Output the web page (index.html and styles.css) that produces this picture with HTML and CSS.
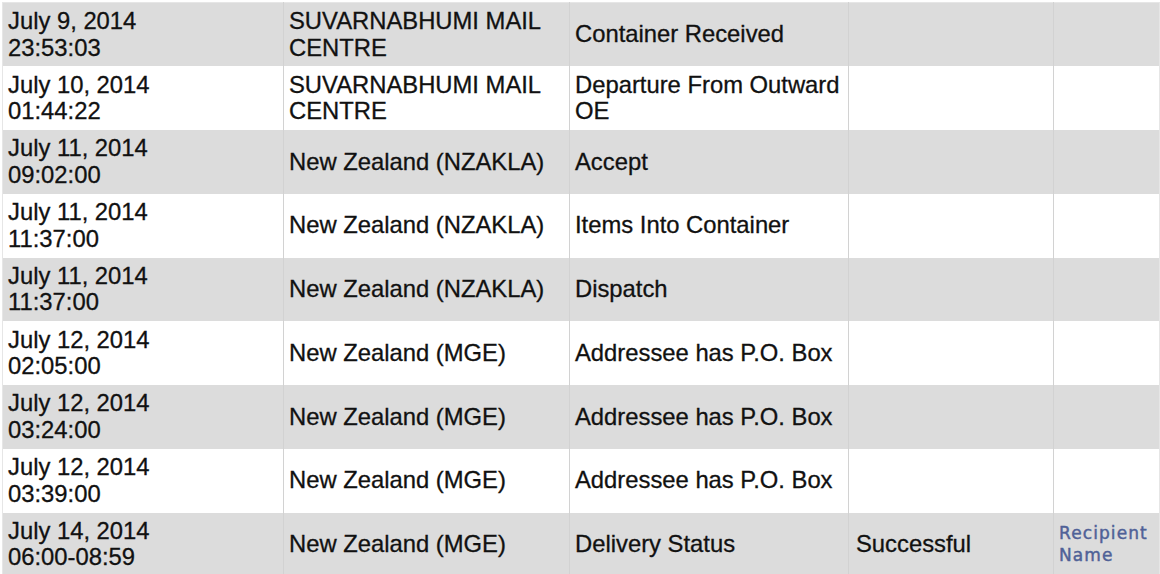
FILE: index.html
```
<!DOCTYPE html>
<html>
<head>
<meta charset="utf-8">
<link rel="stylesheet" href="styles.css">
</head>
<body>
<table class="track">
  <colgroup>
    <col class="c-date"><col class="c-loc"><col class="c-event"><col class="c-status"><col class="c-recip">
  </colgroup>
  <tbody>
    <tr class="odd"><td>July 9, 2014<br>23:53:03</td><td>SUVARNABHUMI MAIL CENTRE</td><td>Container Received</td><td></td><td></td></tr>
    <tr class="even"><td>July 10, 2014<br>01:44:22</td><td>SUVARNABHUMI MAIL CENTRE</td><td>Departure From Outward OE</td><td></td><td></td></tr>
    <tr class="odd"><td>July 11, 2014<br>09:02:00</td><td>New Zealand (NZAKLA)</td><td>Accept</td><td></td><td></td></tr>
    <tr class="even"><td>July 11, 2014<br>11:37:00</td><td>New Zealand (NZAKLA)</td><td>Items Into Container</td><td></td><td></td></tr>
    <tr class="odd"><td>July 11, 2014<br>11:37:00</td><td>New Zealand (NZAKLA)</td><td>Dispatch</td><td></td><td></td></tr>
    <tr class="even"><td>July 12, 2014<br>02:05:00</td><td>New Zealand (MGE)</td><td>Addressee has P.O. Box</td><td></td><td></td></tr>
    <tr class="odd"><td>July 12, 2014<br>03:24:00</td><td>New Zealand (MGE)</td><td>Addressee has P.O. Box</td><td></td><td></td></tr>
    <tr class="even"><td>July 12, 2014<br>03:39:00</td><td>New Zealand (MGE)</td><td>Addressee has P.O. Box</td><td></td><td></td></tr>
    <tr class="odd"><td>July 14, 2014<br>06:00-08:59</td><td>New Zealand (MGE)</td><td>Delivery Status</td><td class="status">Successful</td><td class="recip">Recipient Name</td></tr>
  </tbody>
</table>
</body>
</html>
```
FILE: styles.css
```
html, body {
  margin: 0;
  padding: 0;
  background: #ffffff;
}

.track {
  margin: 2px 0 0 2px;
  border-collapse: collapse;
  table-layout: fixed;
  width: 1157px;
  border: 1px solid #e6e6e6;
  font-family: "Liberation Sans", Arial, Helvetica, sans-serif;
  font-size: 23.8px;
  line-height: 26.5px;
  color: #111111;
  -webkit-text-stroke: 0.3px #111111;
}

.c-date { width: 281px; }
.c-loc { width: 286px; }
.c-event { width: 279px; }
.c-status { width: 205px; }
.c-recip { width: 106px; }

.track tr { height: 63.75px; }

.track td {
  padding: 0 2px 0 5px;
  vertical-align: middle;
  border-left: 1px solid #d2d2d2;
  text-align: left;
}

.track td:first-child { border-left: none; }

.odd { background: #dcdcdc; }
.even { background: #ffffff; }

.track td.status { padding-left: 7px; }

.track td.recip {
  font-family: "DejaVu Sans", Verdana, sans-serif;
  font-size: 17px;
  line-height: 22px;
  letter-spacing: 1.1px;
  color: #4f6197;
  -webkit-text-stroke: 0.45px #4f6197;
  padding-left: 5px;
  padding-right: 0;
}
```
